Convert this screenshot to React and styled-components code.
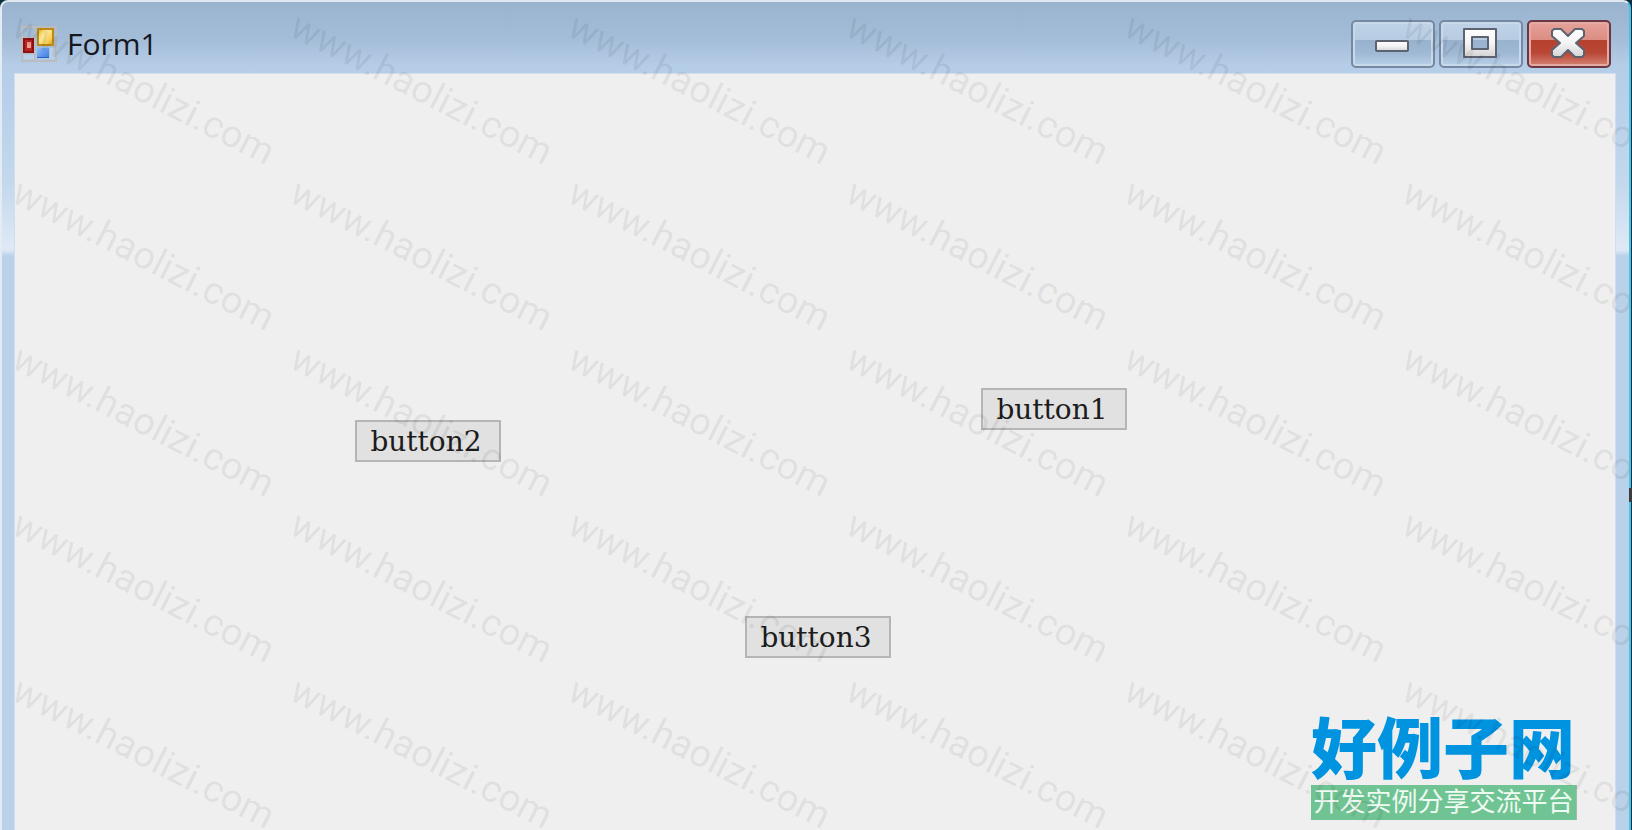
import styled, { createGlobalStyle } from "styled-components";

const GlobalStyle = createGlobalStyle`
  * {
    box-sizing: border-box;
  }
  body {
    margin: 0;
    background: #0b2f3c;
  }
`;

const Window = styled.main`
  position: relative;
  display: flex;
  flex-direction: column;
  min-height: 100vh;
  margin-right: 1px;
  padding: 0 14px 0 13px;
  overflow: hidden;
  border-top: 2px solid #dfe8f0;
  border-left: 2px solid #e3ebf3;
  border-right: 2px solid #45c5e6;
  border-radius: 8px 8px 0 0;
  background: linear-gradient(
    #9ab4cf 0,
    #a3bcd7 36px,
    #b6cde7 64px,
    #b9d1ea 110px,
    #c3d8ec 180px,
    #dfe9f5 248px,
    #b9d1e9 254px
  );
`;

const TitleBar = styled.header`
  display: flex;
  align-items: center;
  height: 72px;
  padding: 12px 4px 0 6px;
`;

const Title = styled.h1`
  flex: 1;
  margin: 0 0 0 10px;
  color: #15181f;
  font: 400 30px/60px "Open Sans", "Noto Sans", sans-serif;
`;

const Captions = styled.div`
  display: flex;
  gap: 4px;
`;

const CaptionButton = styled.button`
  display: flex;
  align-items: center;
  justify-content: center;
  width: 84px;
  height: 48px;
  padding: 0 2px 0 0;
  border: 2px solid ${(props) => (props.$danger ? "#693845" : "#7589a3")};
  border-radius: 5px;
  box-shadow: inset 0 0 0 2px
    ${(props) => (props.$danger ? "#e6aaa3" : "#c7d9eb")};
  background: ${(props) =>
    props.$danger
      ? "linear-gradient(#e5a29a 0, #dc8c82 42%, #b5412d 42%, #b94735 70%, #d48375 100%)"
      : "linear-gradient(#bfd3e7 0, #b7cce2 42%, #98b1cd 42%, #9fb8d3 70%, #b9d0e8 100%)"};
`;

const Client = styled.section`
  position: relative;
  flex: 1;
  outline: 1px solid #cfdff1;
  background: #efefef;
`;

const FormButton = styled.button`
  position: absolute;
  left: ${(props) => props.$x}px;
  top: ${(props) => props.$y}px;
  width: 146px;
  height: 42px;
  padding: 2px 4px 0 0;
  border: 2px solid #b5b5b5;
  background: #e1e1e1;
  color: #1c1c1c;
  font: 400 28px/36px "DejaVu Serif", serif;
`;

const Brand = styled.aside`
  position: absolute;
  right: 38px;
  bottom: 10px;
  width: 266px;
  font-family: "Noto Sans CJK SC", sans-serif;
`;

const BrandName = styled.div`
  color: #0093e0;
  font-size: 66px;
  font-weight: 900;
  line-height: 66px;
  padding-bottom: 8px;
  white-space: nowrap;
`;

const BrandLine = styled.div`
  height: 35px;
  border-right: 1px solid #a4b8ac;
  background: #70c393;
  color: #eefaf2;
  font-size: 26px;
  line-height: 29px;
  text-align: center;
  white-space: nowrap;
`;

const Watermarks = styled.div`
  position: absolute;
  inset: 0;
  display: grid;
  grid-template-columns: repeat(6, 278px);
  grid-auto-rows: 166px;
  padding-left: 8px;
  overflow: hidden;
  pointer-events: none;
`;

const Mark = styled.span`
  color: rgba(0, 0, 0, 0.08);
  font: 400 38px/40px Roboto, sans-serif;
  white-space: nowrap;
  transform: rotate(27deg);
  transform-origin: 0 32px;
`;

const ResizeGrip = styled.div`
  position: absolute;
  right: 0;
  top: 488px;
  width: 3px;
  height: 14px;
  background: #3c3c40;
`;

const buttons = [
  { name: "button1", x: 966, y: 314 },
  { name: "button2", x: 340, y: 346 },
  { name: "button3", x: 730, y: 542 },
];

function FormIcon() {
  return (
    <svg width="36" height="36" viewBox="0 0 36 36" aria-hidden="true">
      <defs>
        <linearGradient id="gold" x1="0" y1="0" x2="1" y2="1">
          <stop offset="0" stopColor="#f0b92c" />
          <stop offset="0.4" stopColor="#ffe996" />
          <stop offset="1" stopColor="#f0b51c" />
        </linearGradient>
        <linearGradient id="blue" x1="0" y1="0" x2="1" y2="1">
          <stop offset="0" stopColor="#8fc0ff" />
          <stop offset="1" stopColor="#3b76dd" />
        </linearGradient>
      </defs>
      <path
        d="M1 1h34v34H1zM14 1v34M1 12h13M1 27h13"
        fill="none"
        stroke="#bbbcc0"
        strokeWidth="2"
      />
      <path d="M3 29h10v4H3zM29 22h5v11h-5z" fill="#b9d0e8" />
      <rect x="3" y="13" width="9" height="13" fill="#b62422" stroke="#8f1014" strokeWidth="2" />
      <rect x="6" y="16" width="4" height="6" fill="#ed9a91" />
      <rect x="17" y="3" width="15" height="16" fill="url(#gold)" stroke="#bd8a17" strokeWidth="2" />
      <rect x="16" y="22" width="12" height="10" fill="url(#blue)" />
      <path d="M16 31.5h12" stroke="#2a62c8" />
    </svg>
  );
}

function CaptionIcon({ kind }) {
  const style = { stroke: "#5d6270", strokeWidth: 2, strokeLinejoin: "round" };
  return (
    <svg width="36" height="34" viewBox="0 0 36 34" aria-hidden="true">
      <defs>
        <linearGradient id={kind + "Fill"} x1="0" y1="0" x2="0" y2="1">
          <stop offset="0" stopColor="#ffffff" />
          <stop offset="0.5" stopColor="#f4f4f4" />
          <stop offset="1" stopColor="#d4d4d4" />
        </linearGradient>
      </defs>
      {kind === "minimize" && (
        <rect x="2" y="14" width="32" height="10" rx="1" fill="url(#minimizeFill)" {...style} />
      )}
      {kind === "maximize" && (
        <path
          d="M2 2h32v28H2zM10 10v12h16V10z"
          fill="url(#maximizeFill)"
          fillRule="evenodd"
          {...style}
        />
      )}
      {kind === "close" && (
        <path
          d="M4 2h7l7 7 7-7h7l2 2v5l-8 7 8 7v5l-2 2h-7l-7-7-7 7H4l-2-2v-5l8-7-8-7V4z"
          fill="url(#closeFill)"
          {...style}
        />
      )}
    </svg>
  );
}

function App() {
  return (
    <>
      <GlobalStyle />
      <Window>
        <TitleBar>
          <FormIcon />
          <Title>Form1</Title>
          <Captions>
            <CaptionButton aria-label="Minimize">
              <CaptionIcon kind="minimize" />
            </CaptionButton>
            <CaptionButton aria-label="Maximize">
              <CaptionIcon kind="maximize" />
            </CaptionButton>
            <CaptionButton aria-label="Close" $danger>
              <CaptionIcon kind="close" />
            </CaptionButton>
          </Captions>
        </TitleBar>
        <Client>
          {buttons.map((button) => (
            <FormButton key={button.name} $x={button.x} $y={button.y}>
              {button.name}
            </FormButton>
          ))}
          <Brand>
            <BrandName>好例子网</BrandName>
            <BrandLine>开发实例分享交流平台</BrandLine>
          </Brand>
        </Client>
        <Watermarks aria-hidden="true">
          {Array.from({ length: 30 }, (_, i) => (
            <Mark key={i}>www.haolizi.com</Mark>
          ))}
        </Watermarks>
      </Window>
      <ResizeGrip />
    </>
  );
}

export default App;
